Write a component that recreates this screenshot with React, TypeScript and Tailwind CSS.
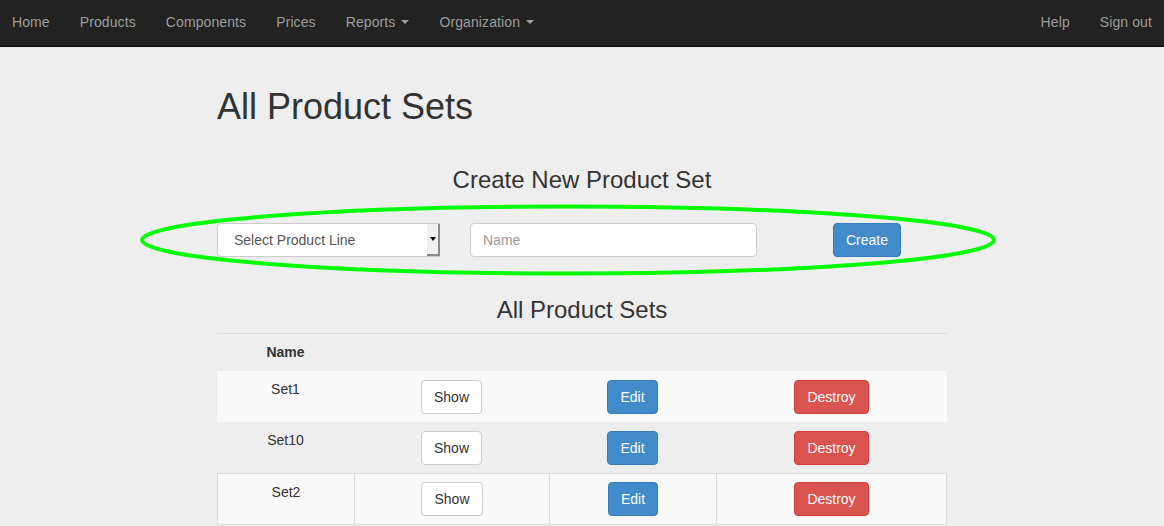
import type { ReactNode } from "react";

const leftLinks = [
	{ label: "Home" },
	{ label: "Products" },
	{ label: "Components" },
	{ label: "Prices" },
	{ label: "Reports", caret: true },
	{ label: "Organization", caret: true },
];

const sets = ["Set1", "Set10", "Set2"];

function Caret() {
	return (
		<span className="ml-[6px] inline-block h-0 w-0 border-x-[4px] border-t-[4px] border-x-transparent border-t-[#9d9d9d] align-middle" />
	);
}

function Btn({
	kind,
	children,
}: {
	kind: "default" | "primary" | "danger";
	children: ReactNode;
}) {
	const styles = {
		default: "bg-white border-[#ccc] text-[#333]",
		primary: "bg-[#428bca] border-[#357ebd] text-white",
		danger: "bg-[#d9534f] border-[#d43f3a] text-white",
	};
	return (
		<button
			type="button"
			className={`h-[34px] rounded-[4px] border px-[12px] text-[14px] leading-[20px] ${styles[kind]}`}
		>
			{children}
		</button>
	);
}

function Cell({
	children,
	bordered,
	last,
}: {
	children?: ReactNode;
	bordered?: boolean;
	last?: boolean;
}) {
	return (
		<div
			className={`flex justify-center pt-[8px] ${
				bordered ? (last ? "border-l border-r border-[#ddd]" : "border-l border-[#ddd]") : ""
			}`}
		>
			{children}
		</div>
	);
}

export default function App() {
	return (
		<div
			className="relative min-h-[526px] bg-[#eee] text-[14px] text-[#333]"
			style={{ fontFamily: '"Liberation Sans", Arial, sans-serif' }}
		>
			<nav className="flex h-[47px] items-center justify-between border-b border-[#080808] bg-[#222] pb-[2px] tracking-[0.1px] text-[#9d9d9d]">
				<ul className="ml-[-3px] flex">
					{leftLinks.map((l) => (
						<li key={l.label} className="flex items-center px-[15px] leading-[20px]">
							{l.label}
							{l.caret && <Caret />}
						</li>
					))}
				</ul>
				<ul className="mr-[-3px] flex">
					<li className="px-[15px] leading-[20px]">Help</li>
					<li className="px-[15px] leading-[20px]">Sign out</li>
				</ul>
			</nav>

			<main className="mx-auto w-[730px] pt-[40px]">
				<h1 className="text-[36px] font-medium leading-[1.1]">All Product Sets</h1>

				<h3 className="mt-[40px] text-center text-[24px] font-medium leading-[1.1]">
					Create New Product Set
				</h3>

				<div className="mt-[30px] flex items-center">
					<div className="flex h-[34px] w-[223px] items-stretch rounded-l-[4px] border border-r-0 border-[#ccc] bg-white">
						<span className="flex flex-1 items-center pl-[16px] pt-[1px] text-[#555]">
							Select Product Line
						</span>
						<span className="flex w-[13px] items-center justify-center border-r-[2px] border-b-[2px] border-[#8a8a8a] bg-[#f0f0f0]">
							<span className="h-0 w-0 border-x-[3px] border-t-[4px] border-x-transparent border-t-black" />
						</span>
					</div>
					<div className="ml-[30px] flex h-[34px] w-[287px] items-center rounded-[4px] border border-[#ccc] bg-white pl-[12px] pt-[1px] text-[#999]">
						Name
					</div>
					<div className="ml-[76px]">
						<Btn kind="primary">Create</Btn>
					</div>
				</div>

				<h3 className="mt-[40px] text-center text-[24px] font-medium leading-[1.1]">
					All Product Sets
				</h3>

				<div className="mt-[10px]">
					<div className="grid h-[38px] grid-cols-[137px_195px_167px_231px] border-t border-[#ddd]">
						<div className="pt-[8px] text-center font-bold leading-[20px]">Name</div>
						<div />
						<div />
						<div />
					</div>
					{sets.map((s, i) => {
						const bordered = i === 2;
						return (
							<div
								key={s}
								className={`grid grid-cols-[137px_195px_167px_231px] leading-[20px] ${
									i === 1 ? "h-[51px]" : "bg-[#f9f9f9]"
								} ${i === 0 ? "h-[51px]" : ""} ${
									bordered ? "h-[52px] border-y border-[#ddd]" : ""
								}`}
							>
								<Cell bordered={bordered}>
									<span>{s}</span>
								</Cell>
								<Cell bordered={bordered}>
									<div className={bordered ? "" : "pt-[1px]"}>
										<Btn kind="default">Show</Btn>
									</div>
								</Cell>
								<Cell bordered={bordered}>
									<div className={bordered ? "" : "pt-[1px]"}>
										<Btn kind="primary">Edit</Btn>
									</div>
								</Cell>
								<Cell bordered={bordered} last>
									<div className={bordered ? "" : "pt-[1px]"}>
										<Btn kind="danger">Destroy</Btn>
									</div>
								</Cell>
							</div>
						);
					})}
				</div>
			</main>

			<svg
				className="pointer-events-none absolute left-0 top-0"
				width="1164"
				height="526"
				viewBox="0 0 1164 526"
			>
				<ellipse cx="568" cy="240" rx="426" ry="33.5" fill="none" stroke="#00ff00" strokeWidth="4" />
			</svg>
		</div>
	);
}
